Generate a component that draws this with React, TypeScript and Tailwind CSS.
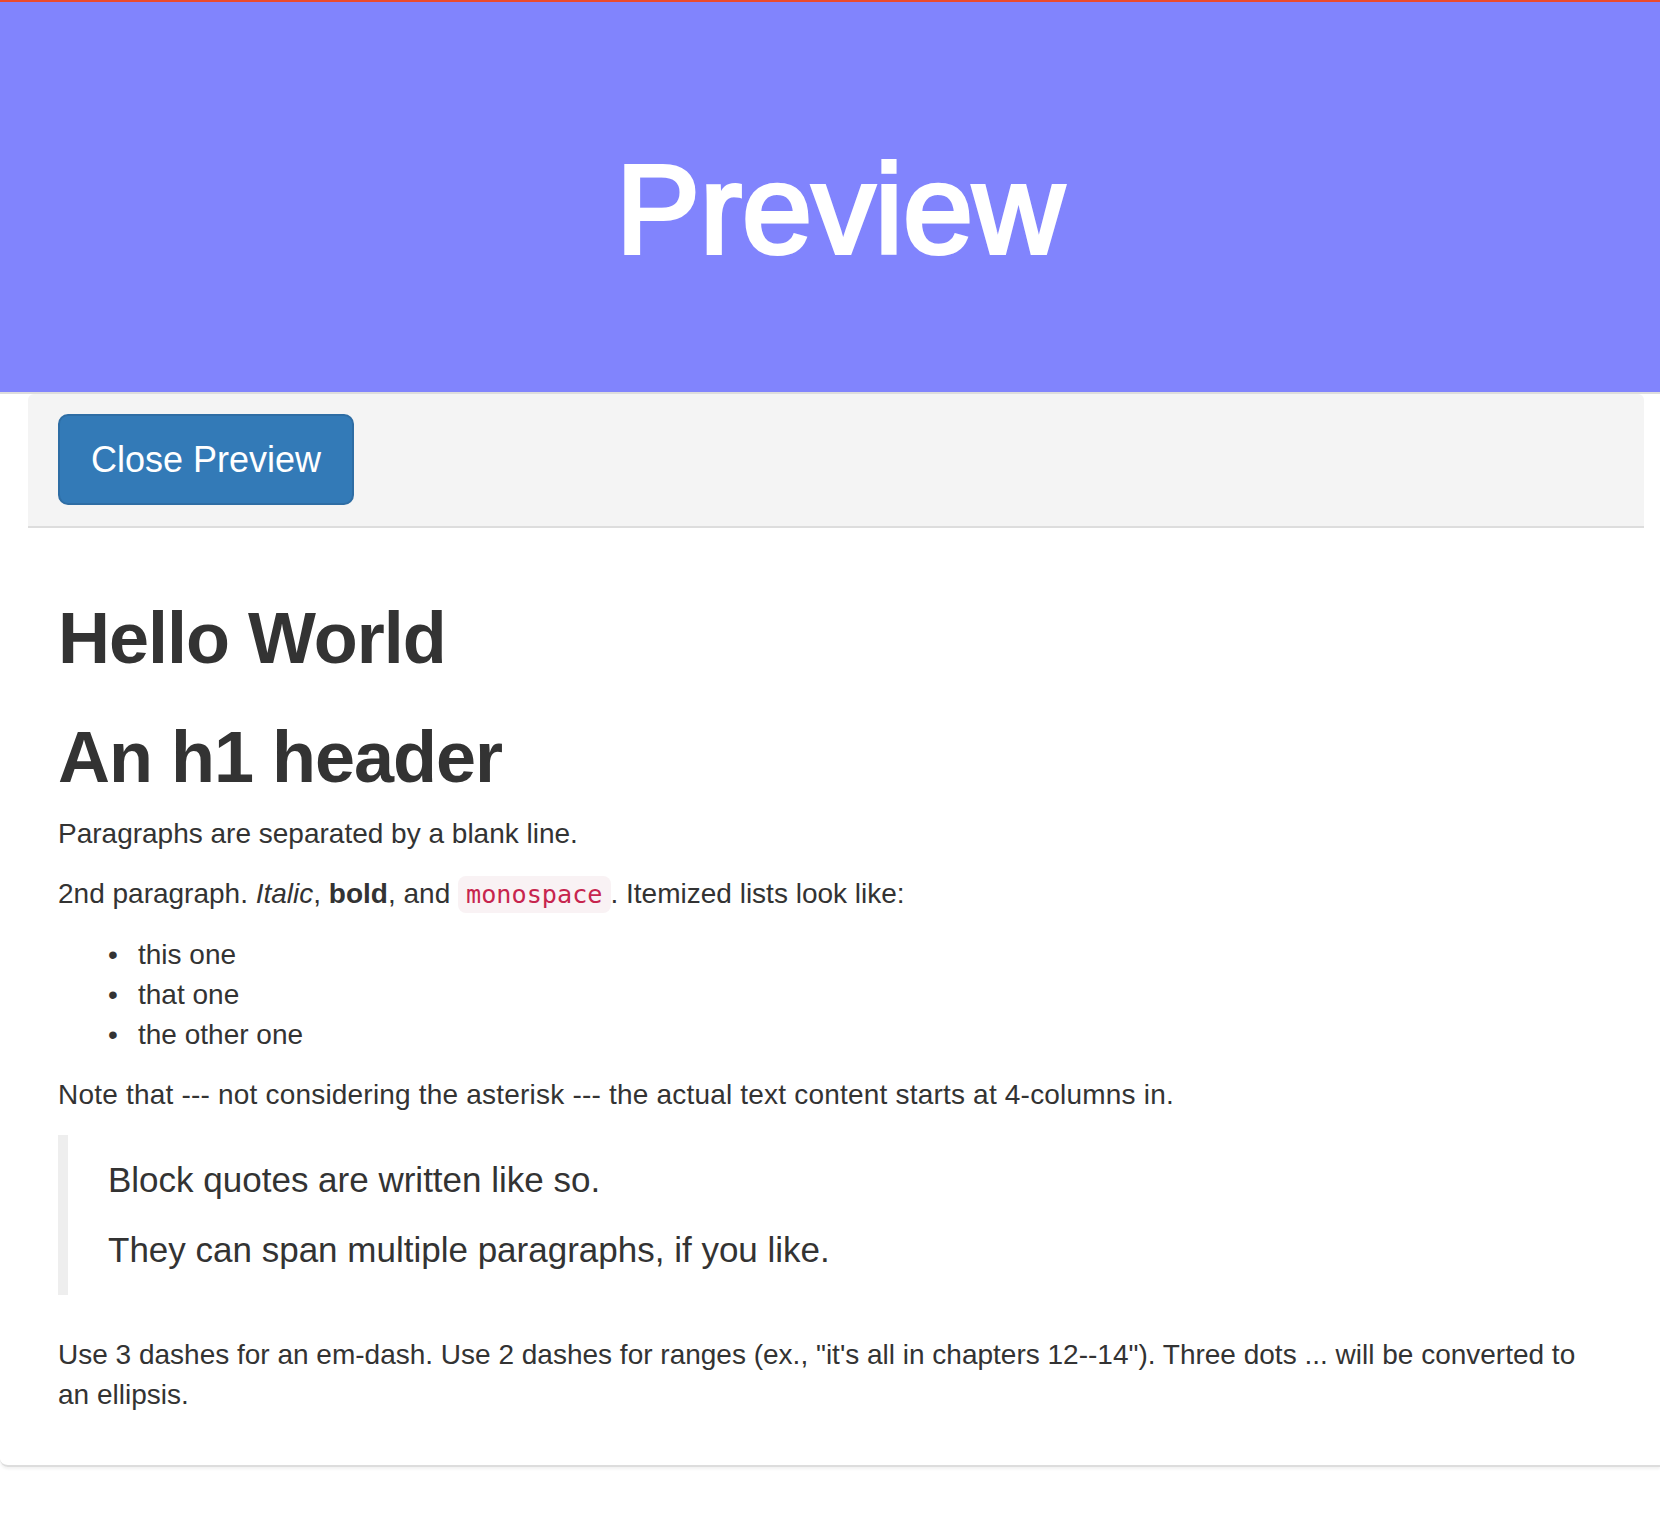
import React from 'react';

export default function App() {
  return (
    <div className="min-h-[1534px] bg-white font-['Liberation_Sans',Arial,sans-serif] text-[#333]">
      {/* top banner */}
      <header className="h-[392px] border-t-2 border-[#ec4a2c] bg-[#8184fd] pt-[139px] pl-[20px] text-center">
        <h1 className="text-[126px] leading-[138px] text-white [-webkit-text-stroke:4px_white]">Preview</h1>
      </header>

      <div className="rounded-bl-[8px] border-t-2 border-b-2 border-[#ddd] shadow-[0_2px_3px_rgba(0,0,0,0.06)]">
        <div className="ml-[28px] mr-[16px] flex items-start rounded-t-[6px] border-b-2 border-[#ddd] bg-[#f4f4f4] px-[30px] pt-[20px] pb-[21px]">
          <button className="h-[91px] rounded-[10px] border-2 border-[#2e6da4] bg-[#337ab7] px-[31px] text-[36px] leading-[48px] text-white">
            Close Preview
          </button>
        </div>

        <div className="ml-[28px] mr-[16px] px-[30px] pt-[31px] pb-[30px] text-[28px] leading-[40px]">
          <h1 className="mt-[40px] mb-[17px] text-[72px] leading-[1.1] font-bold tracking-[-1px]">Hello World</h1>
          <h1 className="mt-[40px] mb-[17px] text-[72px] leading-[1.1] font-bold tracking-[-1px]">An h1 header</h1>
          <p className="mb-[20px]">Paragraphs are separated by a blank line.</p>
          <p className="mb-[20px]">
            2nd paragraph. <em>Italic</em>, <strong className="font-bold">bold</strong>, and{' '}
            <code className="rounded-[8px] bg-[#f9f2f4] px-[8px] py-[4px] font-['DejaVu_Sans_Mono',monospace] text-[25.2px] text-[#c7254e]">monospace</code>. Itemized lists look like:
          </p>
          <ul className="mb-[20px] list-none pl-[80px]">
            <li className="relative before:absolute before:left-[-30px] before:content-['•']">this one</li>
            <li className="relative before:absolute before:left-[-30px] before:content-['•']">that one</li>
            <li className="relative before:absolute before:left-[-30px] before:content-['•']">the other one</li>
          </ul>
          <p className="mb-[20px] tracking-[0.2px]">Note that --- not considering the asterisk --- the actual text content starts at 4-columns in.</p>
          <blockquote className="mb-[40px] border-l-[10px] border-[#eee] px-[40px] py-[20px] text-[35px] leading-[50px]">
            <p className="mb-[20px]">Block quotes are written like so.</p>
            <p>They can span multiple paragraphs, if you like.</p>
          </blockquote>
          <p className="mb-[20px]">
            Use 3 dashes for an em-dash. Use 2 dashes for ranges (ex., "it's all in chapters 12--14"). Three dots ... will be converted to an ellipsis.
          </p>
        </div>
      </div>
    </div>
  );
}
